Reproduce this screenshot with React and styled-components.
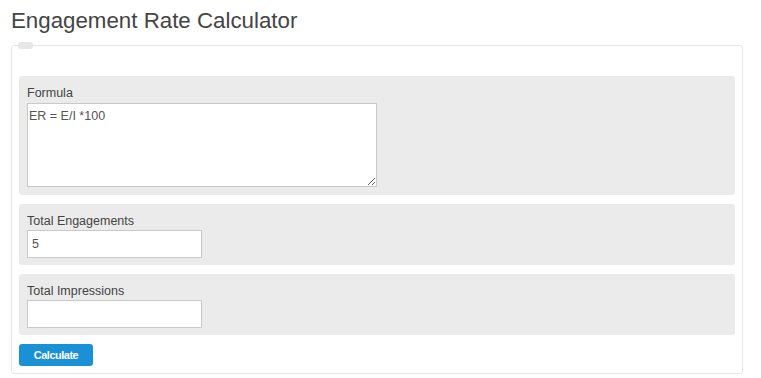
import React from "react";
import styled, { createGlobalStyle } from "styled-components";

const Global = createGlobalStyle`
  html, body { margin: 0; padding: 0; background: #fff; }
  body { font-family: "Liberation Sans", Arial, sans-serif; }
  * { box-sizing: border-box; }
`;

const Page = styled.div`
  padding: 0 18px 0 11px;
`;

const Title = styled.h1`
  margin: 0;
  padding-top: 8px;
  height: 45px;
  font-size: 22.3px;
  line-height: 26px;
  font-weight: normal;
  color: #444;
`;

const Card = styled.div`
  position: relative;
  border: 1px solid #e6e6e6;
  border-radius: 3px;
  padding: 30px 7px 7px 7px;
  display: flex;
  flex-direction: column;
  gap: 9px;
`;

const Tab = styled.span`
  position: absolute;
  left: 6px;
  top: -4px;
  width: 15px;
  height: 7px;
  border-radius: 3px;
  background: #e6e6e6;
`;

const Panel = styled.div`
  background: #ebebeb;
  border-radius: 3px;
  padding: 10px 8px 7px 8px;
  display: flex;
  flex-direction: column;
  align-items: flex-start;
  gap: 1px;
`;

const Label = styled.label`
  font-size: 12.5px;
  line-height: 15px;
  color: #444;
`;

const Area = styled.textarea`
  width: 350px;
  height: 84px;
  margin: 1px 0 1px 0;
  padding: 5px 1px;
  border: 1px solid #c9c9c9;
  background: #fff;
  font-family: "Liberation Sans", Arial, sans-serif;
  font-size: 12.5px;
  color: #555;
  resize: both;
  outline: none;
`;

const Input = styled.input`
  width: 175px;
  height: 28px;
  margin: 0;
  padding: 0 4px;
  border: 1px solid #c9c9c9;
  background: #fff;
  font-family: "Liberation Sans", Arial, sans-serif;
  font-size: 12.5px;
  color: #555;
  outline: none;
`;

const Button = styled.button`
  align-self: flex-start;
  width: 74px;
  height: 22px;
  margin: 0;
  padding: 0;
  border: none;
  border-radius: 3px;
  background: #1a91d7;
  color: #fff;
  font-family: "Liberation Sans", Arial, sans-serif;
  font-weight: bold;
  font-size: 11px;
  letter-spacing: -0.5px;
  cursor: pointer;
`;

export default function App() {
  return (
    <Page>
      <Global />
      <Title>Engagement Rate Calculator</Title>
      <Card>
        <Tab />
        <Panel>
          <Label>Formula</Label>
          <Area defaultValue="ER = E/I *100" />
        </Panel>
        <Panel>
          <Label>Total Engagements</Label>
          <Input defaultValue="5" />
        </Panel>
        <Panel>
          <Label>Total Impressions</Label>
          <Input defaultValue="" />
        </Panel>
        <Button>Calculate</Button>
      </Card>
    </Page>
  );
}
